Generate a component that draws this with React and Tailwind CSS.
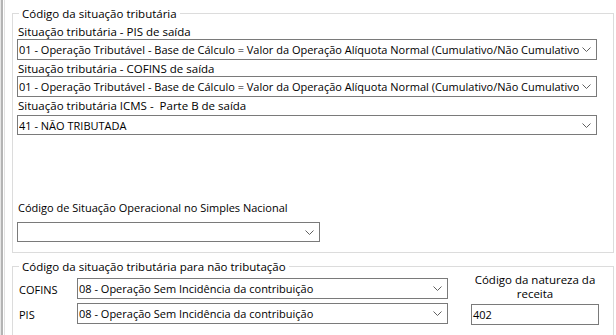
import React from "react";

function Chevron() {
  return (
    <svg width="9" height="5" viewBox="0 0 9 5" className="shrink-0">
      <polyline points="0.5,0.5 4.5,4.5 8.5,0.5" fill="none" stroke="#606060" strokeWidth="1" />
    </svg>
  );
}

function Select({ value, w, h = "h-[21px]" }) {
  return (
    <div className={`${w} ${h} border border-[#7a7a7a] bg-white flex items-center pl-[1px] pr-[5px]`}>
      <div className="flex-1 overflow-hidden whitespace-nowrap leading-[15px] mr-[3px] text-[11px]">{value}</div>
      <Chevron />
    </div>
  );
}

function Legend({ children }) {
  return (
    <span className="absolute left-[6px] -top-[8px] px-[3px] bg-white leading-[15px] whitespace-nowrap text-[11.5px]">
      {children}
    </span>
  );
}

export default function App() {
  const long =
    "01 - Operação Tributável - Base de Cálculo = Valor da Operação Alíquota Normal (Cumulativo/Não Cumulativo)";
  return (
    <div className="w-[616px] h-[335px] bg-white flex overflow-hidden text-[11px] text-black font-['Segoe_UI','Open_Sans',sans-serif]">
      <div className="w-[1px] h-full bg-[#e6e6e6]" />
      <div className="w-[2px] h-full bg-[#b4b4b4]" />
      <div className="w-[1px] h-full bg-white" />
      <div className="w-[1px] h-full bg-[#e2e2e2]" />
      <div className="flex-1 flex flex-col pl-[7px] pt-[13px]">
        <div className="relative border border-[#dcdcdc] w-[602px] h-[240px] shrink-0 pl-[4px] pt-[10px]">
          <Legend>Código da situação tributária</Legend>
          <div className="leading-[15px] ml-[1px] text-[11.5px]">Situação tributária - PIS de saída</div>
          <Select value={long} w="w-[580px]" />
          <div className="leading-[15px] ml-[1px] mt-[1px] text-[11.5px]">Situação tributária - COFINS de saída</div>
          <Select value={long} w="w-[580px]" />
          <div className="leading-[15px] ml-[1px] mt-[1px] text-[11.5px]">Situação tributária ICMS -&nbsp; Parte B de saída</div>
          <div className="mt-[2px]">
            <Select value="41 - NÃO TRIBUTADA" w="w-[580px]" h="h-[20px]" />
          </div>
          <div className="leading-[15px] ml-[1px] mt-[65px] text-[11px]">Código de Situação Operacional no Simples Nacional</div>
          <div className="mt-[7px]">
            <Select value="" w="w-[303px]" h="h-[20px]" />
          </div>
        </div>
        <div className="relative border border-[#dcdcdc] w-[602px] h-[90px] shrink-0 mt-[13px] flex">
          <Legend>Código da situação tributária para não tributação</Legend>
          <div className="flex flex-col pt-[11px]">
            <div className="flex items-center h-[21px]">
              <div className="w-[64px] pl-[6px] leading-[15px] pt-[2px]">COFINS</div>
              <Select value="08 - Operação Sem Incidência da contribuição" w="w-[371px]" />
            </div>
            <div className="flex items-center h-[21px] mt-[4px]">
              <div className="w-[64px] pl-[6px] leading-[15px] pt-[2px]">PIS</div>
              <Select value="08 - Operação Sem Incidência da contribuição" w="w-[371px]" />
            </div>
          </div>
          <div className="ml-[23px] w-[128px] flex flex-col pt-[6px]">
            <div className="text-center leading-[14px] text-[11.5px]">
              Código da natureza da
              <br />
              receita
            </div>
            <div className="mt-[3px] h-[21px] border border-[#7a7a7a] flex items-center pl-[1px] leading-[15px]">402</div>
          </div>
        </div>
      </div>
    </div>
  );
}
